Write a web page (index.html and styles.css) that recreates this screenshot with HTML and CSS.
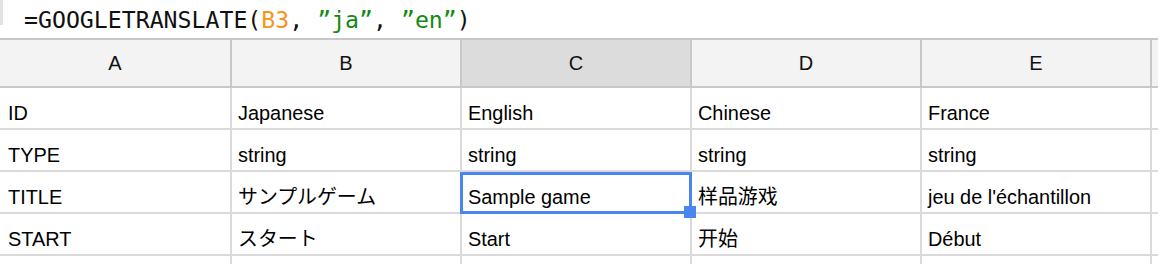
FILE: index.html
```html
<!DOCTYPE html>
<html>
<head>
<meta charset="utf-8">
<link rel="stylesheet" href="styles.css">
</head>
<body>
<div class="formula-bar">
  <div class="fx-edge"></div>
  <div class="formula">=GOOGLETRANSLATE(<span class="ref">B3</span>, <span class="str">”ja”</span>, <span class="str">”en”</span>)</div>
</div>
<div class="sheet">
  <div class="hcell">A</div>
  <div class="hcell">B</div>
  <div class="hcell active">C</div>
  <div class="hcell">D</div>
  <div class="hcell">E</div>
  <div class="hcell rest"></div>

  <div class="cell">ID</div>
  <div class="cell">Japanese</div>
  <div class="cell">English</div>
  <div class="cell">Chinese</div>
  <div class="cell">France</div>
  <div class="cell rest"></div>

  <div class="cell">TYPE</div>
  <div class="cell">string</div>
  <div class="cell">string</div>
  <div class="cell">string</div>
  <div class="cell">string</div>
  <div class="cell rest"></div>

  <div class="cell">TITLE</div>
  <div class="cell">サンプルゲーム</div>
  <div class="cell selected">Sample game<span class="sel-box"></span><span class="sel-handle"></span></div>
  <div class="cell">样品游戏</div>
  <div class="cell">jeu de l'échantillon</div>
  <div class="cell rest"></div>

  <div class="cell">START</div>
  <div class="cell">スタート</div>
  <div class="cell">Start</div>
  <div class="cell">开始</div>
  <div class="cell">Début</div>
  <div class="cell rest"></div>

  <div class="cell tail"></div>
  <div class="cell tail"></div>
  <div class="cell tail"></div>
  <div class="cell tail"></div>
  <div class="cell tail"></div>
  <div class="cell tail rest"></div>
</div>
</body>
</html>
```
FILE: styles.css
```css
html, body {
  margin: 0;
  padding: 0;
  background: #ffffff;
  width: 1158px;
  height: 264px;
  overflow: hidden;
}

.formula-bar {
  height: 38px;
  display: flex;
  align-items: flex-start;
  box-sizing: border-box;
}

.fx-edge {
  width: 3px;
  height: 25px;
  background: #e2e2e2;
  flex: none;
}

.formula {
  margin-left: 21px;
  padding-top: 6px;
  font-family: "DejaVu Sans Mono", "Liberation Mono", monospace;
  font-size: 23.2px;
  line-height: 27px;
  color: #111111;
  white-space: pre;
}

.ref { color: #f6941f; }
.str { color: #138a13; }

.sheet {
  display: grid;
  grid-template-columns: 232px repeat(4, 230px) 1fr;
  grid-template-rows: 48px repeat(4, 42px) 8px;
  border-top: 2px solid #c8c8c8;
  font-family: "Liberation Sans", Arial, "Noto Sans CJK JP", sans-serif;
}

.hcell {
  background: #f3f3f3;
  border-right: 2px solid #c8c8c8;
  border-bottom: 2px solid #c8c8c8;
  display: flex;
  align-items: center;
  justify-content: center;
  font-size: 20px;
  color: #111111;
}

.hcell.active {
  background: #dcdcdc;
}

.hcell.rest {
  border-right: none;
}

.cell {
  border-right: 2px solid #dadada;
  border-bottom: 2px solid #dadada;
  display: flex;
  align-items: flex-end;
  padding: 0 6px 3px 6px;
  font-size: 19.9px;
  line-height: 24px;
  color: #000000;
  white-space: nowrap;
  position: relative;
}

.sheet > .cell:nth-child(6n+1) {
  padding-left: 8px;
}

.cell.rest {
  border-right: none;
  padding: 0;
}

.cell.tail {
  padding: 0;
  border-bottom: none;
}

.cell.selected {
  z-index: 2;
}

.sel-box {
  position: absolute;
  left: -2px;
  top: 0;
  right: -2px;
  bottom: -2px;
  border: 3px solid #4a86f0;
  pointer-events: none;
}

.sel-handle {
  position: absolute;
  right: -6px;
  bottom: -6px;
  width: 12px;
  height: 12px;
  background: #4a86f0;
}
```
